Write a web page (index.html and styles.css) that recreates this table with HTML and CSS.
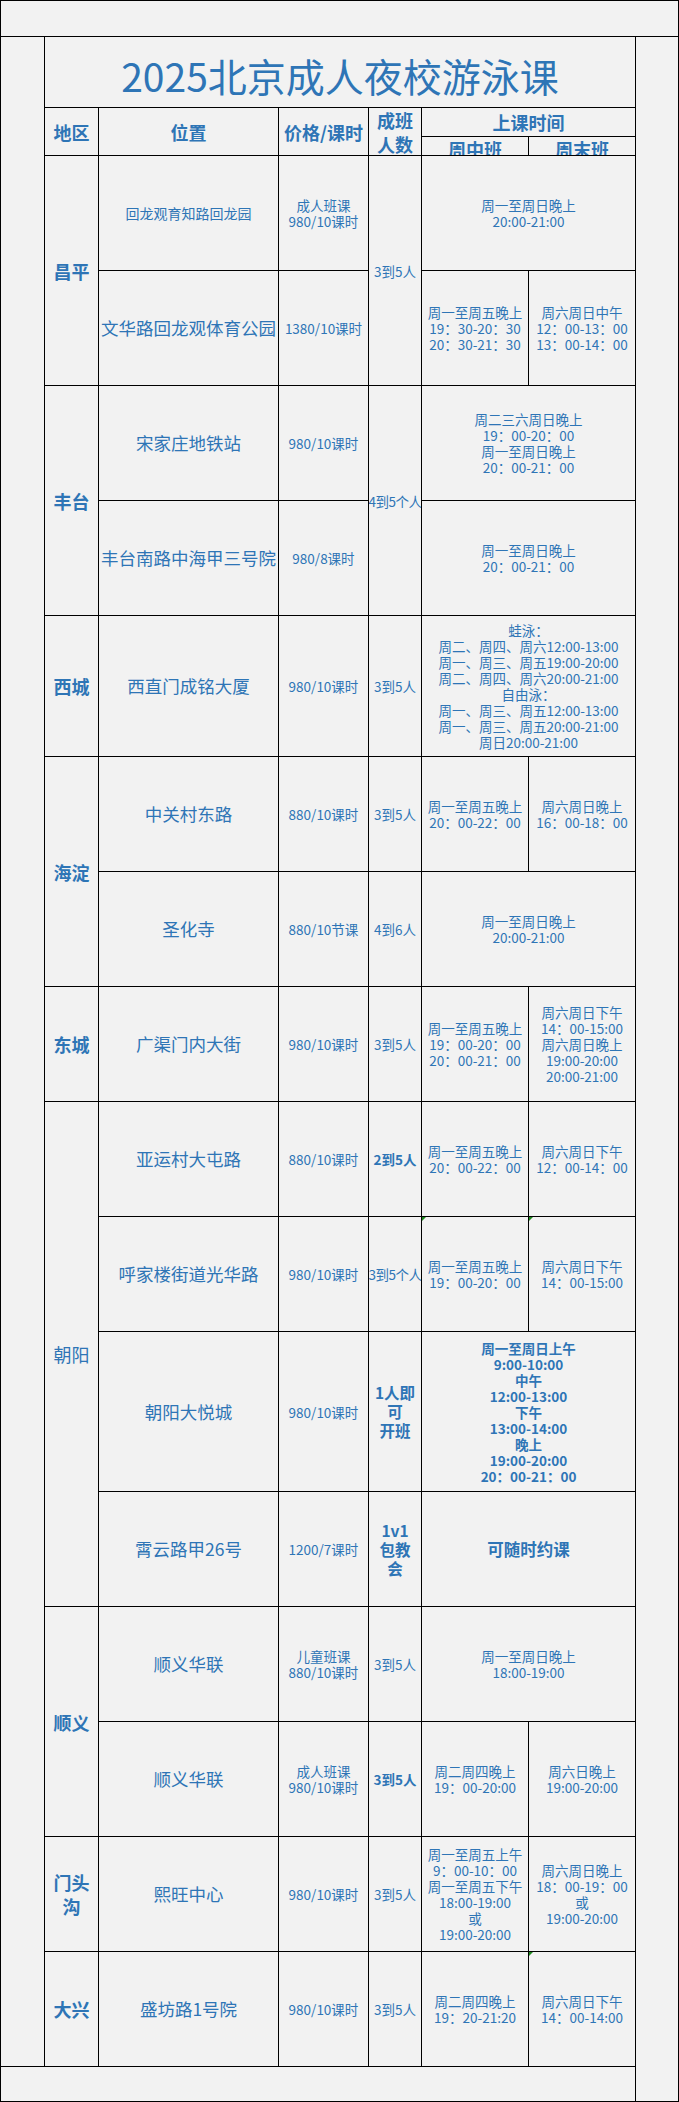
FILE: index.html
```html
<!DOCTYPE html>
<html lang="zh-CN">
<head>
<meta charset="utf-8">
<title>2025北京成人夜校游泳课</title>
<link rel="stylesheet" href="styles.css">
</head>
<body>
<div class="sheet">
  <div class="band-top"></div>
  <div class="margin-left"></div>
  <div class="table">
    <div class="c title span-c2x">2025北京成人夜校游泳课</div>

    <div class="c hd rs2">地区</div>
    <div class="c hd rs2">位置</div>
    <div class="c hd rs2">价格/课时</div>
    <div class="c hd rs2 hd-count">成班<br>人数</div>
    <div class="c hd cs2">上课时间</div>
    <div class="c hd sub">周中班</div>
    <div class="c hd sub">周末班</div>

    <!-- 昌平 -->
    <div class="c region rs2">昌平</div>
    <div class="c loc small-loc">回龙观育知路回龙园</div>
    <div class="c txt">成人班课<br>980/10课时</div>
    <div class="c txt rs2">3到5人</div>
    <div class="c txt cs2">周一至周日晚上<br>20:00-21:00</div>
    <div class="c loc">文华路回龙观体育公园</div>
    <div class="c txt">1380/10课时</div>
    <div class="c txt">周一至周五晚上<br>19：30-20：30<br>20：30-21：30</div>
    <div class="c txt">周六周日中午<br>12：00-13：00<br>13：00-14：00</div>

    <!-- 丰台 -->
    <div class="c region rs2">丰台</div>
    <div class="c loc">宋家庄地铁站</div>
    <div class="c txt">980/10课时</div>
    <div class="c txt rs2 tight">4到5个人</div>
    <div class="c txt cs2">周二三六周日晚上<br>19：00-20：00<br>周一至周日晚上<br>20：00-21：00</div>
    <div class="c loc">丰台南路中海甲三号院</div>
    <div class="c txt">980/8课时</div>
    <div class="c txt cs2">周一至周日晚上<br>20：00-21：00</div>

    <!-- 西城 -->
    <div class="c region">西城</div>
    <div class="c loc">西直门成铭大厦</div>
    <div class="c txt">980/10课时</div>
    <div class="c txt">3到5人</div>
    <div class="c txt cs2">蛙泳：<br>周二、周四、周六12:00-13:00<br>周一、周三、周五19:00-20:00<br>周二、周四、周六20:00-21:00<br>自由泳：<br>周一、周三、周五12:00-13:00<br>周一、周三、周五20:00-21:00<br>周日20:00-21:00</div>

    <!-- 海淀 -->
    <div class="c region rs2">海淀</div>
    <div class="c loc">中关村东路</div>
    <div class="c txt">880/10课时</div>
    <div class="c txt">3到5人</div>
    <div class="c txt">周一至周五晚上<br>20：00-22：00</div>
    <div class="c txt">周六周日晚上<br>16：00-18：00</div>
    <div class="c loc">圣化寺</div>
    <div class="c txt">880/10节课</div>
    <div class="c txt">4到6人</div>
    <div class="c txt cs2">周一至周日晚上<br>20:00-21:00</div>

    <!-- 东城 -->
    <div class="c region">东城</div>
    <div class="c loc">广渠门内大街</div>
    <div class="c txt">980/10课时</div>
    <div class="c txt">3到5人</div>
    <div class="c txt">周一至周五晚上<br>19：00-20：00<br>20：00-21：00</div>
    <div class="c txt">周六周日下午<br>14：00-15:00<br>周六周日晚上<br>19:00-20:00<br>20:00-21:00</div>

    <!-- 朝阳 -->
    <div class="c region plain rs4">朝阳</div>
    <div class="c loc">亚运村大屯路</div>
    <div class="c txt">880/10课时</div>
    <div class="c txt bold">2到5人</div>
    <div class="c txt">周一至周五晚上<br>20：00-22：00</div>
    <div class="c txt">周六周日下午<br>12：00-14：00</div>

    <div class="c loc">呼家楼街道光华路</div>
    <div class="c txt">980/10课时</div>
    <div class="c txt tight">3到5个人</div>
    <div class="c txt flag">周一至周五晚上<br>19：00-20：00</div>
    <div class="c txt flag">周六周日下午<br>14：00-15:00</div>

    <div class="c loc">朝阳大悦城</div>
    <div class="c txt">980/10课时</div>
    <div class="c big">1人即<br>可<br>开班</div>
    <div class="c txt bold cs2">周一至周日上午<br>9:00-10:00<br>中午<br>12:00-13:00<br>下午<br>13:00-14:00<br>晚上<br>19:00-20:00<br>20：00-21：00</div>

    <div class="c loc">霄云路甲26号</div>
    <div class="c txt">1200/7课时</div>
    <div class="c big">1v1<br>包教<br>会</div>
    <div class="c big-one cs2">可随时约课</div>

    <!-- 顺义 -->
    <div class="c region rs2">顺义</div>
    <div class="c loc">顺义华联</div>
    <div class="c txt">儿童班课<br>880/10课时</div>
    <div class="c txt">3到5人</div>
    <div class="c txt cs2">周一至周日晚上<br>18:00-19:00</div>
    <div class="c loc">顺义华联</div>
    <div class="c txt">成人班课<br>980/10课时</div>
    <div class="c txt bold">3到5人</div>
    <div class="c txt">周二周四晚上<br>19：00-20:00</div>
    <div class="c txt">周六日晚上<br>19:00-20:00</div>

    <!-- 门头沟 -->
    <div class="c region">门头<br>沟</div>
    <div class="c loc">熙旺中心</div>
    <div class="c txt">980/10课时</div>
    <div class="c txt">3到5人</div>
    <div class="c txt">周一至周五上午<br>9：00-10：00<br>周一至周五下午<br>18:00-19:00<br>或<br>19:00-20:00</div>
    <div class="c txt">周六周日晚上<br>18：00-19：00<br>或<br>19:00-20:00</div>

    <!-- 大兴 -->
    <div class="c region">大兴</div>
    <div class="c loc">盛坊路1号院</div>
    <div class="c txt">980/10课时</div>
    <div class="c txt">3到5人</div>
    <div class="c txt">周二周四晚上<br>19：20-21:20</div>
    <div class="c txt flag">周六周日下午<br>14：00-14:00</div>
  </div>
  <div class="margin-right"></div>
  <div class="band-bottom-left"></div>
  <div class="band-bottom-right"></div>
</div>
</body>
</html>
```

FILE: styles.css
```css
html, body {
  margin: 0;
  padding: 0;
  background: #f2f2f2;
}

body {
  font-family: "Noto Sans CJK SC", "Liberation Sans", sans-serif;
  color: #2e75b6;
}

.sheet {
  width: 679px;
  height: 2102px;
  box-sizing: border-box;
  border: 1px solid #000;
  background: #f2f2f2;
  display: grid;
  grid-template-columns: 43px 592px 42px;
  grid-template-rows: 36px 2030px 34px;
}

.band-top {
  grid-column: 1 / 4;
  border-bottom: 1px solid #000;
}

.margin-left {
  border-bottom: 1px solid #000;
}

.band-bottom-left {
  grid-column: 1 / 3;
  border-right: 1px solid #000;
}

.table {
  display: grid;
  background: #000;
  gap: 1px;
  padding: 0 1px 1px 1px;
  grid-template-columns: 53px 179px 89px 52px 106px 106px;
  grid-template-rows:
    70px 28px 18px
    114px 114px 114px 114px
    140px
    114px 114px 114px
    114px 114px 159px 114px
    114px 114px
    114px 114px;
}

.c {
  position: relative;
  background: #f2f2f2;
  display: flex;
  align-items: center;
  justify-content: center;
  text-align: center;
  overflow: hidden;
  white-space: nowrap;
}

.rs2 { grid-row: span 2; }
.rs4 { grid-row: span 4; }
.cs2 { grid-column: span 2; }
.span-c2x { grid-column: span 6; }

.title {
  font-size: 39px;
  line-height: 44px;
  padding-top: 6px;
  box-sizing: border-box;
  color: #2e75b6;
}

.hd {
  font-size: 18px;
  font-weight: 700;
  line-height: 24px;
}

.hd-count {
  line-height: 24px;
}

.sub {
  align-items: flex-start;
  line-height: 18px;
  padding-top: 3px;
  box-sizing: border-box;
}

.region {
  font-size: 18px;
  font-weight: 700;
  line-height: 24px;
}

.region.plain {
  font-weight: 400;
}

.loc {
  font-size: 17.5px;
  line-height: 22px;
}

.small-loc {
  font-size: 14px;
}

.txt {
  font-size: 13.5px;
  line-height: 16px;
}

.txt.bold {
  font-weight: 700;
}

.tight {
  letter-spacing: -0.5px;
}

.big {
  font-size: 15.5px;
  font-weight: 700;
  line-height: 19px;
}

.big-one {
  font-size: 16.5px;
  font-weight: 700;
}

.flag::before {
  content: "";
  position: absolute;
  left: 0;
  top: 0;
  width: 0;
  height: 0;
  border-top: 4px solid #1e8a1e;
  border-right: 4px solid transparent;
}
```
